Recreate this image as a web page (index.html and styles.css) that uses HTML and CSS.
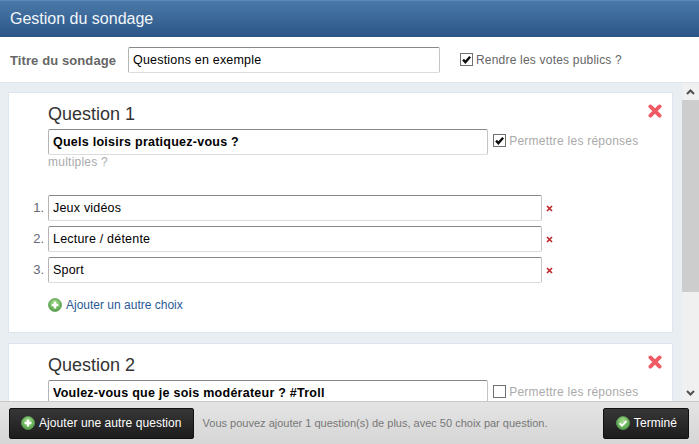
FILE: index.html
```html
<!DOCTYPE html>
<html lang="fr">
<head>
<meta charset="utf-8">
<title>Gestion du sondage</title>
<link rel="stylesheet" href="styles.css">
</head>
<body>
<svg class="defs" width="0" height="0" aria-hidden="true">
  <defs>
    <radialGradient id="gball" cx="50%" cy="35%" r="65%">
      <stop offset="0" stop-color="#a6dc8e"/>
      <stop offset="1" stop-color="#4f9f45"/>
    </radialGradient>
    <symbol id="plus" viewBox="0 0 14 14">
      <circle cx="7" cy="7" r="6.5" fill="url(#gball)" stroke="#5f9e58" stroke-width=".8"/>
      <path d="M7 3.6v6.8M3.6 7h6.8" stroke="#fff" stroke-width="2.4"/>
    </symbol>
    <symbol id="ok" viewBox="0 0 14 14">
      <circle cx="7" cy="7" r="6.5" fill="url(#gball)" stroke="#5f9e58" stroke-width=".8"/>
      <path d="M3.6 7.2l2.4 2.4 4.4-4.6" fill="none" stroke="#fff" stroke-width="2"/>
    </symbol>
    <symbol id="bigx" viewBox="0 0 14 14">
      <path d="M2.4 2.4l9.2 9.2M11.6 2.4l-9.2 9.2" stroke="#ef5a64" stroke-width="3.8" stroke-linecap="round"/>
    </symbol>
    <symbol id="smallx" viewBox="0 0 7 7">
      <path d="M1 1l5 5M6 1l-5 5" stroke="#c0272d" stroke-width="1.7"/>
    </symbol>
    <symbol id="tick" viewBox="0 0 13 13">
      <path d="M2.4 6.6l2.8 3 5.6-6.4" fill="none" stroke="#111" stroke-width="2.8"/>
    </symbol>
  </defs>
</svg>

<header class="head">Gestion du sondage</header>

<div class="title-row">
  <label class="title-label" for="titre">Titre du sondage</label>
  <input class="field field-title" id="titre" value="Questions en exemple">
  <span class="box"><svg class="tick"><use href="#tick"/></svg></span>
  <span class="public">Rendre les votes publics ?</span>
</div>

<div class="middle">
  <main class="list">
    <section class="card">
      <svg class="remove"><use href="#bigx"/></svg>
      <h2 class="q-title">Question 1</h2>
      <div class="q-line">
        <input class="field field-q" value="Quels loisirs pratiquez-vous ?">
        <span class="box box-q"><svg class="tick"><use href="#tick"/></svg></span>
        <span class="multi">Permettre les réponses multiples ?</span>
      </div>
      <ol class="choices">
        <li class="choice"><span class="num">1.</span><input class="field field-c" value="Jeux vidéos"><svg class="del"><use href="#smallx"/></svg></li>
        <li class="choice"><span class="num">2.</span><input class="field field-c" value="Lecture / détente"><svg class="del"><use href="#smallx"/></svg></li>
        <li class="choice"><span class="num">3.</span><input class="field field-c" value="Sport"><svg class="del"><use href="#smallx"/></svg></li>
      </ol>
      <a class="add-choice"><svg class="ico"><use href="#plus"/></svg>Ajouter un autre choix</a>
    </section>
    <section class="card">
      <svg class="remove"><use href="#bigx"/></svg>
      <h2 class="q-title">Question 2</h2>
      <div class="q-line">
        <input class="field field-q" value="Voulez-vous que je sois modérateur ? #Troll">
        <span class="box box-q"></span>
        <span class="multi">Permettre les réponses multiples ?</span>
      </div>
    </section>
  </main>
  <div class="scrollbar">
    <div class="arrow"><svg width="9" height="6" viewBox="0 0 9 6"><path d="M1 5l3.5-3.5L8 5" fill="none" stroke="#505050" stroke-width="2"/></svg></div>
    <div class="thumb"></div>
    <div class="track"></div>
    <div class="arrow"><svg width="9" height="6" viewBox="0 0 9 6"><path d="M1 1l3.5 3.5L8 1" fill="none" stroke="#505050" stroke-width="2"/></svg></div>
  </div>
</div>

<footer class="foot">
  <button class="btn"><svg class="ico"><use href="#plus"/></svg>Ajouter une autre question</button>
  <span class="hint">Vous pouvez ajouter 1 question(s) de plus, avec 50 choix par question.</span>
  <button class="btn btn-done"><svg class="ico"><use href="#ok"/></svg>Terminé</button>
</footer>
</body>
</html>
```

FILE: styles.css
```css
* { box-sizing: border-box; }
html, body { margin: 0; height: 100%; }
body {
  width: 699px;
  height: 444px;
  overflow: hidden;
  display: flex;
  flex-direction: column;
  font-family: "Liberation Sans", Arial, sans-serif;
  font-size: 13px;
  color: #333;
  background: #fff;
}
.defs { position: absolute; }

.head {
  height: 37px;
  flex: none;
  padding: 0 10px;
  line-height: 36px;
  font-size: 16px;
  color: #f2f6fa;
  background: linear-gradient(#4a79a8, #2a5586);
  border-top: 1px solid #5a8aba;
}

.title-row {
  height: 46px;
  flex: none;
  display: flex;
  align-items: center;
  padding: 0 0 0 10px;
  background: #fff;
  border-bottom: 1px solid #dde6ee;
}
.title-label {
  width: 118px;
  flex: none;
  font-weight: bold;
  color: #666;
  padding-top: 1px;
  letter-spacing: .1px;
}
.field {
  height: 26px;
  padding: 0 4px;
  font: 12.5px "Liberation Sans", Arial, sans-serif;
  letter-spacing: .2px;
  color: #000;
  background: #fff;
  border: 1px solid #dcdcdc;
  border-top-color: #888;
  border-left-color: #b4b4b4;
  border-right-color: #c4c4c4;
  border-radius: 2px;
  outline: none;
}
.field-title { width: 312px; margin-right: 20px; padding-top: 1px; }
.box {
  width: 13px;
  height: 13px;
  flex: none;
  display: inline-block;
  background: #fff;
  border: 1px solid #707070;
  vertical-align: -2px;
}
.tick { display: block; width: 11px; height: 11px; }
.public { margin-left: 3px; font-size: 12px; letter-spacing: .2px; color: #666; padding-top: 1px; }

.middle {
  flex: 1;
  min-height: 0;
  display: flex;
  background: #e9eef2;
}
.list {
  flex: 1;
  min-width: 0;
  overflow: hidden;
  padding: 9px 9px 0 8px;
  display: flex;
  flex-direction: column;
  gap: 10px;
}
.card {
  flex: none;
  position: relative;
  background: #fff;
  border: 1px solid #dde6f0;
  padding: 11px 27px 0 39px;
  height: 241px;
}
.remove {
  position: absolute;
  top: 11px;
  right: 10px;
  width: 14px;
  height: 14px;
}
.q-title {
  margin: 0 0 5px;
  font-size: 18px;
  line-height: 20px;
  font-weight: normal;
  color: #333;
}
.q-line { font-size: 12px; line-height: 15px; letter-spacing: .24px; color: #aaa; }
.field-q {
  width: 440px;
  font-weight: bold;
  letter-spacing: .25px;
  vertical-align: middle;
  margin-right: 1px;
}
.multi { color: #aaa; }

.choices { list-style: none; margin: 25px 0 0; padding: 0; }
.choice { display: flex; align-items: center; height: 26px; margin-bottom: 5px; position: relative; }
.num {
  position: absolute;
  right: 100%;
  margin-right: 4px;
  margin-top: -2px;
  font-size: 13px;
  color: #667;
}
.field-c { width: 494px; }
.del { width: 7px; height: 7px; margin-left: 4px; }

.add-choice {
  display: flex;
  align-items: center;
  margin-top: 15px;
  font-size: 12px;
  color: #2a5a96;
}
.ico { width: 14px; height: 14px; flex: none; margin-right: 4px; }

.scrollbar {
  width: 17px;
  flex: none;
  display: flex;
  flex-direction: column;
  background: #f0f0f0;
}
.arrow { height: 17px; flex: none; display: flex; align-items: center; justify-content: center; }
.thumb { height: 192px; flex: none; background: #cdcdcd; }
.track { flex: 1; }

.foot {
  height: 43px;
  flex: none;
  display: flex;
  align-items: center;
  padding: 0 10px 0 9px;
  background: linear-gradient(#e4e4e4, #d6d6d6);
  border-top: 1px solid #c8c8c8;
}
.btn {
  height: 31px;
  padding: 0 11px;
  display: flex;
  align-items: center;
  font: 12px "Liberation Sans", Arial, sans-serif;
  letter-spacing: .07px;
  color: #fff;
  background: linear-gradient(#373737, #1c1c1c);
  border: 1px solid #111;
  border-radius: 2px;
}
.btn .ico { margin-right: 4px; }
.hint { margin-left: 9px; font-size: 11px; color: #777; }
.btn-done { margin-left: auto; padding-left: 12px; }
```
